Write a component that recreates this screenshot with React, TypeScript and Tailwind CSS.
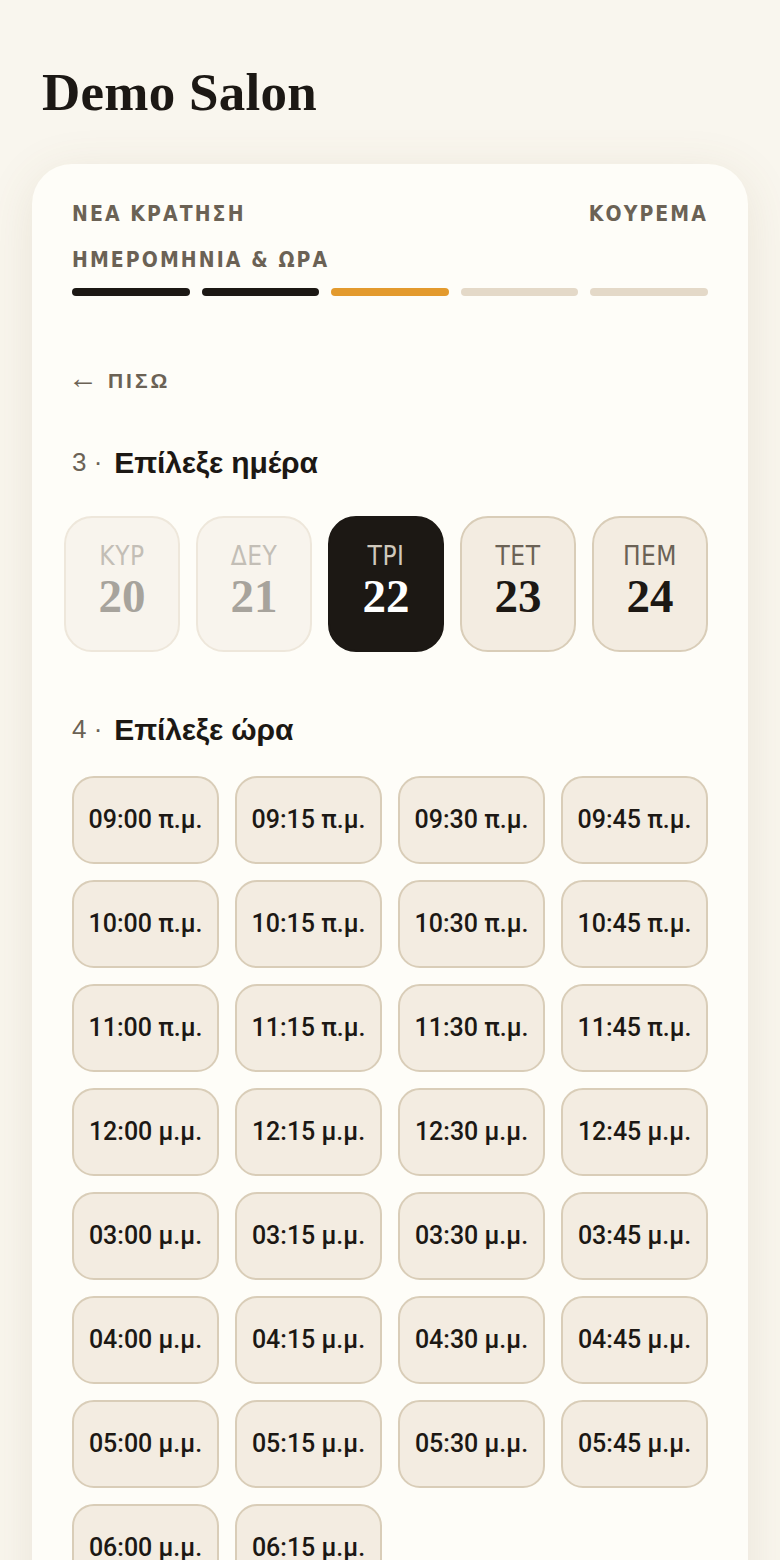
import React from "react";

const sans = "font-['Liberation_Sans','Arial',sans-serif]";
const narrow = "font-['Liberation_Sans_Narrow','DejaVu_Sans_Condensed','Liberation_Sans',sans-serif]";
const serif = "font-['Liberation_Serif','Times_New_Roman',serif]";

const days = [
  { name: "ΚΥΡ", num: "20", state: "disabled" },
  { name: "ΔΕΥ", num: "21", state: "disabled" },
  { name: "ΤΡΙ", num: "22", state: "selected" },
  { name: "ΤΕΤ", num: "23", state: "normal" },
  { name: "ΠΕΜ", num: "24", state: "normal" },
];

const times = [
  "09:00 π.μ.", "09:15 π.μ.", "09:30 π.μ.", "09:45 π.μ.",
  "10:00 π.μ.", "10:15 π.μ.", "10:30 π.μ.", "10:45 π.μ.",
  "11:00 π.μ.", "11:15 π.μ.", "11:30 π.μ.", "11:45 π.μ.",
  "12:00 μ.μ.", "12:15 μ.μ.", "12:30 μ.μ.", "12:45 μ.μ.",
  "03:00 μ.μ.", "03:15 μ.μ.", "03:30 μ.μ.", "03:45 μ.μ.",
  "04:00 μ.μ.", "04:15 μ.μ.", "04:30 μ.μ.", "04:45 μ.μ.",
  "05:00 μ.μ.", "05:15 μ.μ.", "05:30 μ.μ.", "05:45 μ.μ.",
  "06:00 μ.μ.", "06:15 μ.μ.",
];

function DayCard({ name, num, state }: { name: string; num: string; state: string }) {
  const box =
    state === "selected"
      ? "bg-[#1c1814] border-[#1c1814]"
      : state === "disabled"
      ? "bg-[#f8f4ed] border-[#eee7db]"
      : "bg-[#f3ece1] border-[#d9cdb8]";
  const nameColor =
    state === "selected" ? "text-[#cfc8bc]" : state === "disabled" ? "text-[#c3beb6]" : "text-[#6b6255]";
  const numColor =
    state === "selected" ? "text-white" : state === "disabled" ? "text-[#a7a39c]" : "text-[#1c1814]";
  return (
    <div className={`w-[116px] h-[136px] shrink-0 rounded-[28px] border-2 ${box} flex flex-col items-center pt-[22px]`}>
      <div className={`${narrow} text-[26px] leading-[32px] tracking-[0.02em] ${nameColor}`}>{name}</div>
      <div className={`${serif} font-bold text-[47px] leading-[48px] ${numColor}`}>{num}</div>
    </div>
  );
}

export default function App() {
  return (
    <div className="min-h-[1560px] bg-[#f9f6ee] overflow-hidden">
      <div className="px-[32px] pt-[62px]">
        <h1 className={`${serif} font-bold text-[53px] leading-[60px] text-[#1c1814] pl-[10px] tracking-[0.005em]`}>
          Demo Salon
        </h1>
        <div className="mt-[42px] bg-[#fefdf8] rounded-[40px] px-[40px] pt-[40px] pb-[60px] shadow-[0_10px_50px_rgba(120,100,60,0.12)] min-h-[1500px]">
          <div className="flex justify-between">
            <div className={`${narrow} font-bold text-[21px] leading-[20px] tracking-[0.1em] text-[#6b6255]`}>
              ΝΕΑ ΚΡΑΤΗΣΗ
            </div>
            <div className={`${narrow} font-bold text-[21px] leading-[20px] tracking-[0.1em] text-[#6b6255]`}>
              ΚΟΥΡΕΜΑ
            </div>
          </div>
          <div className={`mt-[26px] ${narrow} font-bold text-[21px] leading-[20px] tracking-[0.1em] text-[#6b6255]`}>
            ΗΜΕΡΟΜΗΝΙΑ &amp; ΩΡΑ
          </div>
          <div className="mt-[18px] flex gap-[12px]">
            <div className="flex-1 h-[8px] rounded-full bg-[#1c1814]" />
            <div className="flex-1 h-[8px] rounded-full bg-[#1c1814]" />
            <div className="flex-1 h-[8px] rounded-full bg-[#e39a2d]" />
            <div className="flex-1 h-[8px] rounded-full bg-[#e4d9c8]" />
            <div className="flex-1 h-[8px] rounded-full bg-[#e4d9c8]" />
          </div>

          <div className={`mt-[73px] h-[24px] flex items-center gap-[10px] ${sans} text-[#6b6255]`}>
            <span className="-ml-[4px] text-[30px] leading-[24px] -translate-y-[3px]">←</span>
            <span className="text-[21px] font-bold tracking-[0.14em] leading-[24px]">ΠΙΣΩ</span>
          </div>

          <div className={`mt-[51px] h-[36px] flex items-center ${sans}`}>
            <span className="text-[26px] text-[#6b6255] mr-[12px]">3 ·</span>
            <span className="text-[30px] font-bold text-[#1c1814] tracking-[-0.005em]">Επίλεξε ημέρα</span>
          </div>

          <div className="mt-[36px] -ml-[8px] flex gap-[16px]">
            {days.map((d) => (
              <DayCard key={d.num} {...d} />
            ))}
          </div>

          <div className={`mt-[59px] h-[36px] flex items-center ${sans}`}>
            <span className="text-[26px] text-[#6b6255] mr-[12px]">4 ·</span>
            <span className="text-[30px] font-bold text-[#1c1814] tracking-[-0.005em]">Επίλεξε ώρα</span>
          </div>

          <div className="mt-[29px] grid grid-cols-4 gap-[16px]">
            {times.map((t) => (
              <div
                key={t}
                className="h-[88px] rounded-[22px] border-2 border-[#d9cdb8] bg-[#f3ece1] flex items-center justify-center font-['Roboto','Liberation_Sans',sans-serif] text-[25px] font-medium text-[#1c1814]"
              >
                {t}
              </div>
            ))}
          </div>
        </div>
      </div>
    </div>
  );
}
